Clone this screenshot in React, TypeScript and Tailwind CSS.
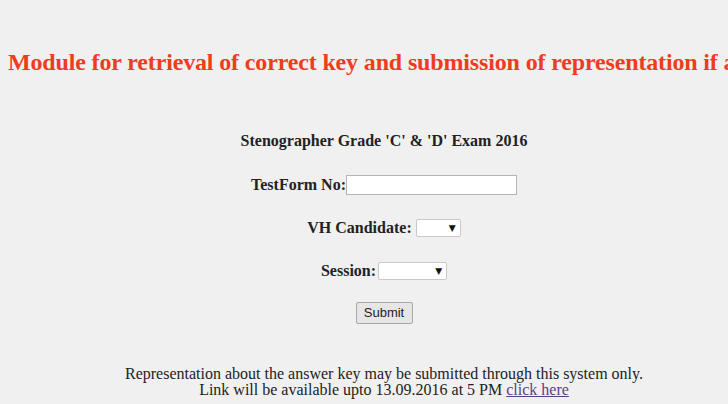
import React from "react";

const serif = "font-['Liberation_Serif','Times_New_Roman',serif]";

function Dropdown({ width }: { width: string }) {
    return (
        <span className={`relative inline-flex h-[18px] ${width}`}>
            <select className="h-full w-full appearance-none rounded-[2px] border border-[#c8c8c8] bg-white" defaultValue="">
                <option value="" />
            </select>
            <span className="pointer-events-none absolute right-[5px] top-[2px] font-['DejaVu_Sans',sans-serif] text-[9px] leading-[14px] text-[#111]">
                ▼
            </span>
        </span>
    );
}

export default function App() {
    return (
        <div className={`min-h-screen w-full overflow-hidden bg-[#f0f0f0] ${serif} text-[#222]`}>
            <h1 className="whitespace-nowrap pl-[8px] pt-[48px] text-[24px] font-bold leading-[28px] tracking-[-0.15px] text-[#f03c1e]">
                Module for retrieval of correct key and submission of representation if any
            </h1>

            <div className="flex flex-col items-center pl-[40px]">
                <p className="mt-[55px] text-[16px] font-bold leading-[20px]">
                    Stenographer Grade 'C' &amp; 'D' Exam 2016
                </p>

                <div className="mt-[24px] flex h-[20px] items-center">
                    <label className="text-[16px] font-bold">TestForm No:</label>
                    <input type="text" className="h-[20px] w-[171px] border border-[#b5b5b5] bg-white" />
                </div>

                <div className="mt-[23px] flex h-[20px] items-center">
                    <label className="mr-[4px] text-[16px] font-bold">VH Candidate:</label>
                    <Dropdown width="w-[45px]" />
                </div>

                <div className="mt-[23px] flex h-[20px] items-center">
                    <label className="mr-[2px] text-[16px] font-bold">Session:</label>
                    <Dropdown width="w-[69px]" />
                </div>

                <button
                    type="button"
                    className="mt-[21px] h-[22px] w-[57px] rounded-[2px] border border-[#a8a8a8] bg-[#e6e6e6] font-['Liberation_Sans',Arial,sans-serif] text-[13px] text-[#222]"
                >
                    Submit
                </button>

                <p className="mt-[42px] text-center text-[16px] leading-[16px]">
                    Representation about the answer key may be submitted through this system only.
                    <br />
                    Link will be available upto 13.09.2016 at 5 PM{" "}
                    <a href="#" className="text-[#5b3f8c] underline">
                        click here
                    </a>
                </p>
            </div>
        </div>
    );
}
